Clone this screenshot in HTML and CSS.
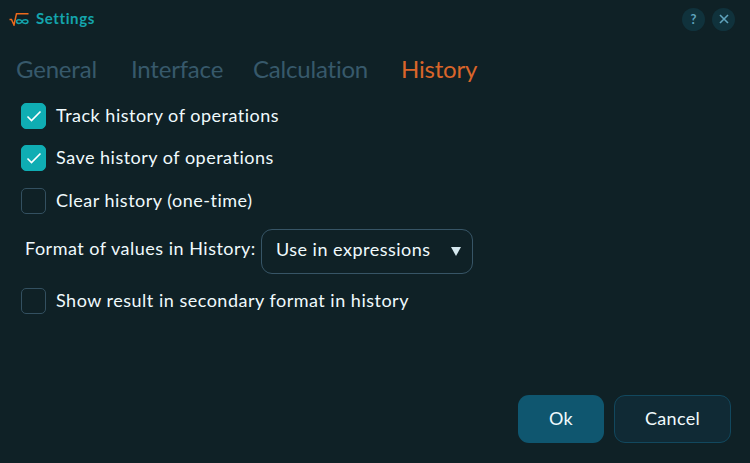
FILE: index.html
```html
<!DOCTYPE html>
<html lang="en">
<head>
    <meta charset="UTF-8">
    <meta name="viewport" content="width=device-width, initial-scale=1.0">
    <title>Settings</title>
    <link rel="stylesheet" href="styles.css">
</head>
<body>
    <div class="window">
        <header class="titlebar">
            <svg class="logo" width="20" height="13" viewBox="0 0 20 13" fill="none">
                <path d="M0.5 6.5H2.5L5 12L7.5 0.7H19.5" stroke="#ee6a1c" stroke-width="1.5"/>
                <path d="M13 8.5C12 6 7.6 6 7.6 8.5C7.6 11 12 11 13 8.5C14 6 18.9 6 18.9 8.5C18.9 11 14 11 13 8.5Z" stroke="#14a5ad" stroke-width="1.5"/>
            </svg>
            <span class="title">Settings</span>
            <div class="window-btns">
                <span class="round-btn">?</span>
                <span class="round-btn">
                    <svg width="10" height="10" viewBox="0 0 10 10" fill="none">
                        <path d="M1 1L9 9M9 1L1 9" stroke="#5fa3bd" stroke-width="1.6"/>
                    </svg>
                </span>
            </div>
        </header>

        <nav class="tabs">
            <span class="tab">General</span>
            <span class="tab">Interface</span>
            <span class="tab">Calculation</span>
            <span class="tab active">History</span>
        </nav>

        <main class="options">
            <label class="option">
                <span class="box checked">
                    <svg width="16" height="12" viewBox="0 0 16 12" fill="none">
                        <path d="M1.5 6.5L5.5 10.5L14.5 1.5" stroke="#fff" stroke-width="1.6"/>
                    </svg>
                </span>
                <span class="label">Track history of operations</span>
            </label>
            <label class="option">
                <span class="box checked">
                    <svg width="16" height="12" viewBox="0 0 16 12" fill="none">
                        <path d="M1.5 6.5L5.5 10.5L14.5 1.5" stroke="#fff" stroke-width="1.6"/>
                    </svg>
                </span>
                <span class="label">Save history of operations</span>
            </label>
            <label class="option">
                <span class="box"></span>
                <span class="label">Clear history (one-time)</span>
            </label>
            <div class="format-row">
                <span class="format-label">Format of values in History:</span>
                <div class="select">
                    <span class="label">Use in expressions</span>
                    <span class="arrow"></span>
                </div>
            </div>
            <label class="option">
                <span class="box"></span>
                <span class="label">Show result in secondary format in history</span>
            </label>
        </main>

        <footer class="buttons">
            <button class="btn btn-ok">Ok</button>
            <button class="btn btn-cancel">Cancel</button>
        </footer>
    </div>
</body>
</html>
```

FILE: styles.css
```css
/* General Styles */
body {
    margin: 0;
    font-family: "Lato", "Open Sans", sans-serif;
    background-color: #0f2126;
    color: #f0fafd;
    overflow: hidden;
}

.window {
    display: flex;
    flex-direction: column;
    height: 463px;
}

/* Title bar */
.titlebar {
    display: flex;
    align-items: center;
    height: 38px;
    padding: 0 15px 0 9px;
}

.logo {
    margin-right: 7px;
}

.title {
    padding-bottom: 2px;
    color: #14a5ad;
    font-size: 15px;
    font-weight: 700;
    letter-spacing: 0.6px;
}

.window-btns {
    display: flex;
    gap: 7px;
    margin-left: auto;
}

.round-btn {
    display: flex;
    justify-content: center;
    align-items: center;
    width: 23px;
    height: 23px;
    border-radius: 50%;
    background-color: #10323c;
    color: #5fa3bd;
    font-size: 13px;
    font-weight: 700;
}

/* Tabs */
.tabs {
    display: grid;
    grid-template-columns: 115px 122px 148px auto;
    height: 40px;
    align-items: center;
    padding: 5px 0 0 16px;
    box-sizing: border-box;
    margin-top: 8px;
}

.tab {
    color: #37596b;
    font-size: 24px;
    letter-spacing: -0.2px;
}

.tab.active {
    color: #d9652a;
}

/* Options */
.options {
    display: flex;
    flex-direction: column;
    padding: 17px 21px 0;
    font-size: 18px;
    letter-spacing: 0.5px;
}

.option {
    display: flex;
    align-items: center;
    gap: 10px;
    height: 26px;
    margin-bottom: 16px;
}

.option:nth-child(2) {
    margin-bottom: 17px;
}

.label {
    padding-bottom: 2px;
}

.box {
    display: flex;
    justify-content: center;
    align-items: center;
    box-sizing: border-box;
    width: 25px;
    height: 26px;
    border: 1px solid #335060;
    border-radius: 5px;
}

.box.checked {
    background-color: #0fadb3;
    border-color: #0fadb3;
}

.format-row {
    display: flex;
    align-items: center;
    gap: 5px;
    height: 45px;
    margin: -1px 0 14px 4px;
}

.format-label {
    padding-bottom: 8px;
}

.select {
    display: flex;
    justify-content: space-between;
    align-items: center;
    box-sizing: border-box;
    width: 212px;
    height: 45px;
    padding: 0 11px 0 14px;
    border: 1px solid #375566;
    border-radius: 11px;
}

.select .label {
    padding-bottom: 5px;
}

.arrow {
    width: 0;
    height: 0;
    border-left: 5.5px solid transparent;
    border-right: 5.5px solid transparent;
    border-top: 9px solid #d5e8ee;
}

/* Buttons */
.buttons {
    display: flex;
    justify-content: flex-end;
    gap: 10px;
    margin-top: auto;
    padding: 0 19px 20px 0;
}

.btn {
    height: 48px;
    padding-bottom: 3px;
    border-radius: 11px;
    color: #f0fafd;
    font-family: inherit;
    font-size: 18px;
    letter-spacing: 0.3px;
    box-sizing: border-box;
}

.btn-ok {
    width: 86px;
    border: none;
    background-color: #0f566f;
}

.btn-cancel {
    width: 117px;
    border: 1px solid #12485e;
    background-color: #102a35;
}
```
